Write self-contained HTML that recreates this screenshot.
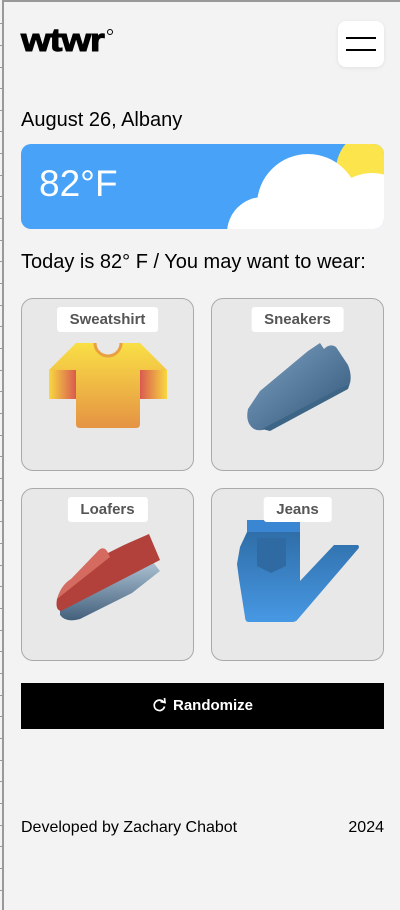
<!DOCTYPE html>
<html><head><meta charset="utf-8"><style>
*{box-sizing:border-box;margin:0;padding:0}
body{width:400px;height:910px;background:#f3f3f3;font-family:"Liberation Sans",sans-serif;position:relative;overflow:hidden;color:#000}
.vl{position:absolute;left:2px;top:0;width:2px;height:910px;background:#999}
.tl{position:absolute;left:2px;top:0;width:398px;height:2px;background:#999}
.tick{position:absolute;left:0;width:3px;height:1px;background:#999}
.logo{position:absolute;left:21px;top:22px;font-size:32px;line-height:36px;font-weight:900;letter-spacing:-1px;transform:scale(1.2,1);transform-origin:left top;-webkit-text-stroke:1px #000}
.deg{position:absolute;left:107px;top:29px;width:6px;height:6px;border:1.5px solid #000;border-radius:50%;z-index:2}
.menu{position:absolute;left:338px;top:21px;width:46px;height:46px;background:#fff;border-radius:8px;box-shadow:0 1px 4px rgba(0,0,0,.08)}
.menu i{position:absolute;left:8px;width:30px;height:2px;background:#000}
.date{position:absolute;left:21px;top:109px;font-size:20px}
.weather{position:absolute;left:21px;top:144px;width:363px;height:85px;background:#48a3f8;border-radius:10px;overflow:hidden}
.weather .t{position:absolute;left:18px;top:19px;font-size:37px;color:#fff}
.c{position:absolute;border-radius:50%}
.today{position:absolute;left:21px;top:251px;font-size:20px}
.card{position:absolute;width:173px;height:173px;background:#e8e8e8;border:1px solid #aaa;border-radius:12px}
.lbl{position:absolute;top:8px;left:50%;transform:translateX(-50%);background:#fff;border-radius:3px;height:25px;padding:0 13px;font-size:15px;font-weight:bold;color:#555;line-height:25px;white-space:nowrap}
.card svg{position:absolute;left:0;top:0}
.btn{position:absolute;left:21px;top:683px;width:363px;height:46px;background:#000;color:#fff;font-size:15px;font-weight:bold;text-align:center;line-height:46px}
.foot{position:absolute;top:819px;font-size:16px}
</style></head><body>
<div class="tl"></div><div class="vl"></div>
<div class="tick" style="top:23px"></div><div class="tick" style="top:45px"></div><div class="tick" style="top:67px"></div><div class="tick" style="top:88px"></div><div class="tick" style="top:110px"></div><div class="tick" style="top:131px"></div><div class="tick" style="top:153px"></div><div class="tick" style="top:175px"></div><div class="tick" style="top:196px"></div><div class="tick" style="top:218px"></div><div class="tick" style="top:240px"></div><div class="tick" style="top:261px"></div><div class="tick" style="top:283px"></div><div class="tick" style="top:305px"></div><div class="tick" style="top:326px"></div><div class="tick" style="top:348px"></div><div class="tick" style="top:370px"></div><div class="tick" style="top:391px"></div><div class="tick" style="top:413px"></div><div class="tick" style="top:435px"></div><div class="tick" style="top:456px"></div><div class="tick" style="top:478px"></div><div class="tick" style="top:500px"></div><div class="tick" style="top:521px"></div><div class="tick" style="top:543px"></div><div class="tick" style="top:565px"></div><div class="tick" style="top:586px"></div><div class="tick" style="top:608px"></div><div class="tick" style="top:630px"></div><div class="tick" style="top:651px"></div><div class="tick" style="top:673px"></div><div class="tick" style="top:695px"></div><div class="tick" style="top:716px"></div><div class="tick" style="top:738px"></div><div class="tick" style="top:760px"></div><div class="tick" style="top:781px"></div><div class="tick" style="top:803px"></div><div class="tick" style="top:825px"></div><div class="tick" style="top:846px"></div><div class="tick" style="top:868px"></div><div class="tick" style="top:890px"></div>
<div class="logo">wtwr</div><div class="deg"></div>
<div class="menu"><i style="top:16px"></i><i style="top:28px"></i></div>
<div class="date">August 26, Albany</div>
<div class="weather"><div class="t">82°F</div>
<div class="c" style="left:315px;top:-14px;width:80px;height:80px;background:#fce54c"></div>
<div class="c" style="left:236px;top:10px;width:102px;height:102px;background:#fff"></div>
<div class="c" style="left:206px;top:53px;width:72px;height:72px;background:#fff"></div>
<div class="c" style="left:306px;top:29px;width:90px;height:90px;background:#fff"></div>
</div>
<div class="today">Today is 82° F / You may want to wear:</div>

<div class="card" style="left:21px;top:298px">
<svg width="173" height="173"><defs><linearGradient id="ts" x1="0" y1="0" x2="0" y2="1"><stop offset="0" stop-color="#f9df45"/><stop offset="1" stop-color="#e59344"/></linearGradient><linearGradient id="sl" x1="0" y1="0" x2="1" y2="0"><stop offset="0" stop-color="#f8d840"/><stop offset="1" stop-color="#d95a50"/></linearGradient><linearGradient id="sr" x1="1" y1="0" x2="0" y2="0"><stop offset="0" stop-color="#f8d840"/><stop offset="1" stop-color="#d95a50"/></linearGradient></defs>
<path d="M54 44 H73 A13 13 0 0 0 99 44 H118 L145 71 H118 V125 Q118 129 114 129 H58 Q54 129 54 125 V71 H27 Z" fill="url(#ts)"/>
<rect x="27" y="71" width="27" height="29" fill="url(#sl)"/><rect x="118" y="71" width="27" height="29" fill="url(#sr)"/>
<path d="M73 44 A13 13 0 0 0 99 44" fill="none" stroke="#e8a040" stroke-width="3"/></svg>
<div class="lbl">Sweatshirt</div></div>

<div class="card" style="left:211px;top:298px">
<svg width="173" height="173"><defs><linearGradient id="sn" x1="0" y1="0" x2="1" y2="1"><stop offset="0" stop-color="#7fa3c2"/><stop offset="1" stop-color="#2f5478"/></linearGradient></defs>
<path d="M36 110 Q33 124 42 130 Q48 133 56 129 L138 84 Q140 76 136 66 L124 48 Q118 44 112 50 L108 44 L96 52 L48 92 Z" fill="url(#sn)"/>
<path d="M50 130 L138 84 L136 90 L58 132 Z" fill="#3d6585"/></svg>
<div class="lbl">Sneakers</div></div>

<div class="card" style="left:21px;top:488px">
<svg width="173" height="173"><defs><linearGradient id="lf" x1="0" y1="0" x2="0" y2="1"><stop offset="0" stop-color="#aec3d4"/><stop offset="1" stop-color="#43607c"/></linearGradient></defs>
<path d="M38 120 L130 72 L138 82 L110 104 L58 130 Q44 134 38 126 Z" fill="url(#lf)"/>
<path d="M35 110 Q33 121 39 122 L138 71 L127 45 L102 56 L86 64 Q82 56 76 62 Z" fill="#b1413a"/>
<path d="M35 110 Q39 96 49 90 L76 62 Q82 56 86 64 L88 68 Z" fill="#d46a60"/></svg>
<div class="lbl">Loafers</div></div>

<div class="card" style="left:211px;top:488px">
<svg width="173" height="173"><defs><linearGradient id="jn" x1="0" y1="0" x2="0" y2="1"><stop offset="0" stop-color="#2f6ea8"/><stop offset="1" stop-color="#4798e4"/></linearGradient></defs>
<rect x="35" y="31" width="53" height="12" fill="#3a86d3"/>
<path d="M35 43 H88 V92 L122 56 H146 Q148 58 146 60 L86 130 Q84 133 80 133 H37 Q33 133 33 128 L27 90 L25 75 L28 58 Z" fill="url(#jn)"/>
<path d="M45 49 H74 V77 L59 84 L45 77 Z" fill="#2f6aa2"/></svg>
<div class="lbl">Jeans</div></div>

<div class="btn"><svg width="15" height="16" viewBox="0 0 15 16" style="vertical-align:-3px;margin-right:6px"><path d="M11.8 5.5 A5.2 5.2 0 1 0 12.5 9.5" fill="none" stroke="#fff" stroke-width="1.7"/><path d="M8.5 4.5 L13 5.5 L12.5 1" fill="none" stroke="#fff" stroke-width="1.7"/></svg>Randomize</div>
<div class="foot" style="left:21px">Developed by Zachary Chabot</div>
<div class="foot" style="right:16px">2024</div>
</body></html>
